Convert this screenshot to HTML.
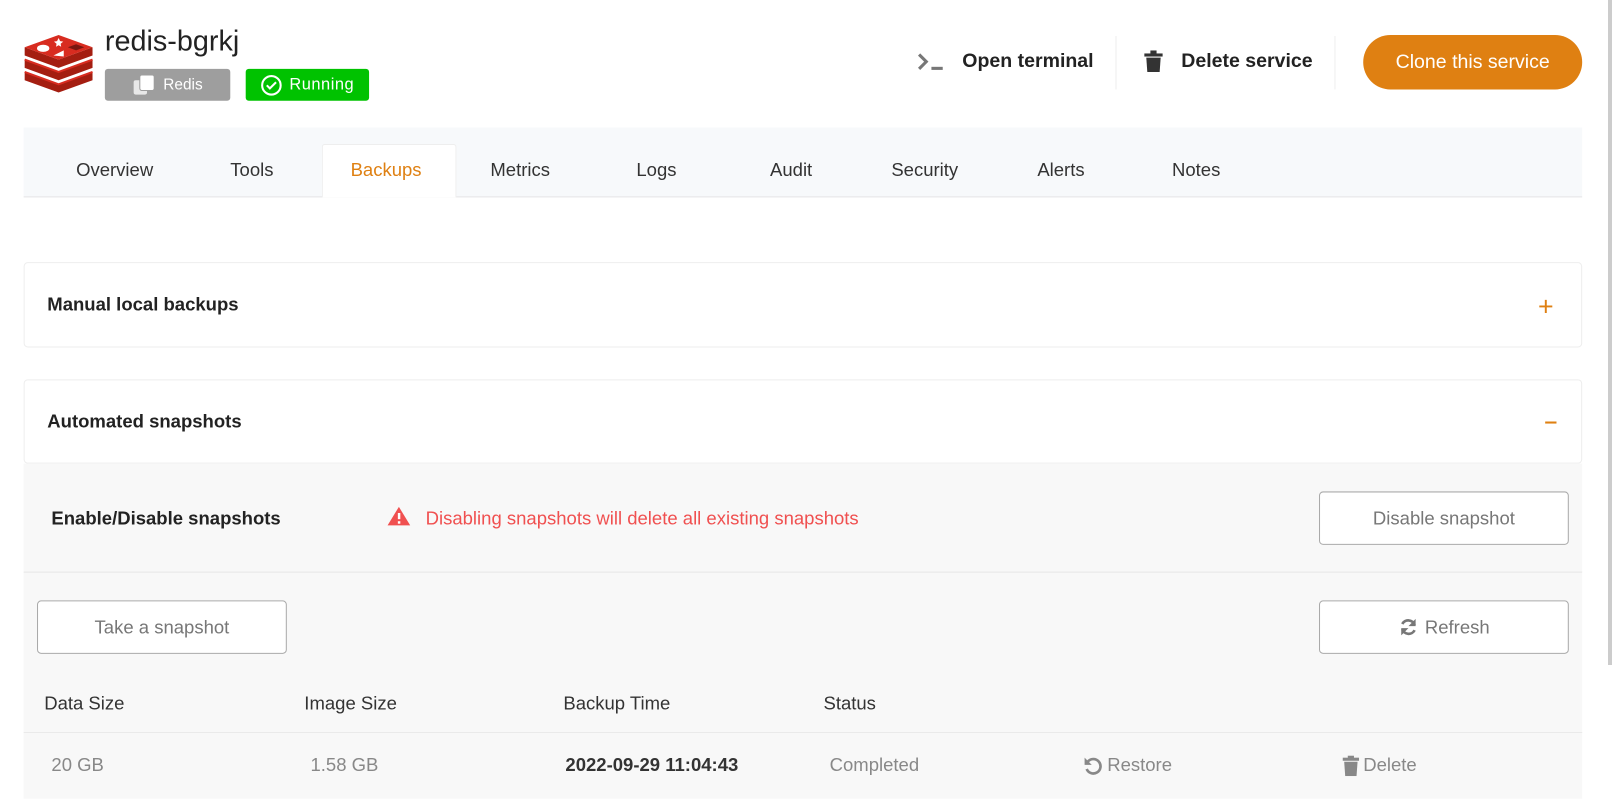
<!DOCTYPE html>
<html><head><meta charset="utf-8">
<style>
*{box-sizing:border-box;margin:0;padding:0}
body{width:1612px;height:811px;background:#fff;font-family:"Liberation Sans",sans-serif;position:relative;overflow:hidden;color:#222}
#w{position:absolute;left:0;top:0;width:1568px;height:789px;transform:scale(1.02806);transform-origin:0 0}
.a{position:absolute;white-space:nowrap}
.tab{position:absolute;top:155px;font-size:18px;color:#333}
.btn{position:absolute;background:#fff;border:1px solid #aaa;border-radius:4px;color:#777;font-size:18px;display:flex;align-items:center;justify-content:center}
.th{position:absolute;top:674px;font-size:18px;color:#333}
.td{position:absolute;top:734px;font-size:18px;color:#888}
</style></head><body>
<div class="a" style="right:0;top:0;width:4px;height:665px;background:#ccc"></div>
<div id="w">
<svg class="a" style="left:22px;top:32px" width="70" height="60" viewBox="0 0 70 60">
<path d="M2 38 L35 50 L68 38 L68 46 L35 58 L2 46Z" fill="#a41e11"/>
<path d="M2 26 L35 38 L68 26 L68 34 L35 46 L2 34Z" fill="#a41e11"/>
<path d="M2 14 L35 26 L68 14 L68 22 L35 34 L2 22Z" fill="#a41e11"/>
<path d="M2 14 L35 2 L68 14 L35 26Z" fill="#d82c20"/>
<path d="M2 26 L35 38 L68 26" fill="none" stroke="#d82c20" stroke-width="2"/>
<path d="M2 38 L35 50 L68 38" fill="none" stroke="#d82c20" stroke-width="2"/>
<ellipse cx="20" cy="15" rx="6" ry="3.5" fill="#fff"/>
<path d="M35 5 l1.5 3 3 .5 -2.5 2 .5 3 -2.5-1.5 -2.5 1.5 .5-3 -2.5-2 3-.5z" fill="#fff"/>
<path d="M30 22 L40 17 L40 23Z" fill="#fff"/>
<path d="M44 14 L52 11 L60 14 L52 17Z" fill="#7a1710"/>
</svg>
<div class="a" style="left:102px;top:24px;font-size:28px;color:#222">redis-bgrkj</div>
<div class="a" style="left:102px;top:67px;width:122px;height:31px;background:#9e9e9e;border-radius:3px;color:#fff;font-size:15px;display:flex;align-items:center;justify-content:center;gap:8px">
<svg width="22" height="22" viewBox="0 0 22 22"><rect x="1" y="6" width="13" height="14" rx="2" fill="#e8e8e8"/><rect x="7" y="1" width="14" height="15" rx="2" fill="#fff" stroke="#9e9e9e"/></svg>Redis</div>
<div class="a" style="left:239px;top:67px;width:120px;height:31px;background:#00c200;border-radius:3px;color:#fff;font-size:16px;display:flex;align-items:center;justify-content:center;gap:6px;letter-spacing:.5px">
<svg width="22" height="22" viewBox="0 0 22 22"><circle cx="11" cy="11" r="9" fill="none" stroke="#fff" stroke-width="2"/><path d="M6.5 11 l3 3 6-6" fill="none" stroke="#fff" stroke-width="2"/></svg>Running</div>
<svg class="a" style="left:892px;top:50px" width="28" height="20" viewBox="0 0 28 20"><path d="M2 3 L9 10 L2 17" fill="none" stroke="#777" stroke-width="3"/><rect x="14" y="15" width="11" height="3" fill="#777"/></svg>
<div class="a" style="left:936px;top:49px;font-size:19px;font-weight:bold;color:#222">Open terminal</div>
<div class="a" style="left:1085px;top:35px;width:1px;height:52px;background:#eee"></div>
<svg class="a" style="left:1113px;top:49px" width="18" height="22" viewBox="0 0 18 22"><rect x="0" y="3" width="18" height="3" fill="#333"/><rect x="6" y="0" width="6" height="4" fill="#333"/><path d="M2 7 H16 L15 21 H3Z" fill="#333"/></svg>
<div class="a" style="left:1149px;top:49px;font-size:19px;font-weight:bold;color:#222">Delete service</div>
<div class="a" style="left:1298px;top:35px;width:1px;height:52px;background:#eee"></div>
<div class="a" style="left:1326px;top:34px;width:213px;height:53px;background:#df8012;border-radius:27px;color:#fff;font-size:19px;display:flex;align-items:center;justify-content:center">Clone this service</div>
<div class="a" style="left:23px;top:124px;width:1516px;height:68px;background:#f7f9fb;border-bottom:1px solid #e6e6e6"></div>
<div class="a" style="left:313px;top:140px;width:131px;height:52px;background:#fff;border:1px solid #eee;border-bottom:none;border-radius:3px 3px 0 0"></div>
<div class="tab" style="left:74px">Overview</div>
<div class="tab" style="left:224px">Tools</div>
<div class="tab" style="left:341px;color:#df8012">Backups</div>
<div class="tab" style="left:477px">Metrics</div>
<div class="tab" style="left:619px">Logs</div>
<div class="tab" style="left:749px">Audit</div>
<div class="tab" style="left:867px">Security</div>
<div class="tab" style="left:1009px">Alerts</div>
<div class="tab" style="left:1140px">Notes</div>
<div class="a" style="left:23px;top:255px;width:1516px;height:83px;border:1px solid #eee;border-radius:4px"></div>
<div class="a" style="left:46px;top:286px;font-size:18px;font-weight:bold">Manual local backups</div>
<div class="a" style="left:1496px;top:283px;font-size:26px;color:#df8012">+</div>
<div class="a" style="left:23px;top:369px;width:1516px;height:82px;border:1px solid #eee;border-radius:4px"></div>
<div class="a" style="left:46px;top:400px;font-size:18px;font-weight:bold">Automated snapshots</div>
<div class="a" style="left:1503px;top:410px;width:11px;height:2px;background:#df8012"></div>
<div class="a" style="left:23px;top:451px;width:1516px;height:326px;background:#f8f8f8"></div>
<div class="a" style="left:23px;top:556px;width:1516px;height:1px;background:#e6e6e6"></div>
<div class="a" style="left:23px;top:712px;width:1516px;height:1px;background:#eaeaea"></div>
<div class="a" style="left:50px;top:494px;font-size:18px;font-weight:bold">Enable/Disable snapshots</div>
<svg class="a" style="left:376px;top:492px" width="24" height="20" viewBox="0 0 24 20"><path d="M12 1 L23 19 H1Z" fill="#f05050"/><rect x="11" y="7" width="2.4" height="6" fill="#fff"/><rect x="11" y="15" width="2.4" height="2.4" fill="#fff"/></svg>
<div class="a" style="left:414px;top:494px;font-size:18px;color:#f05050">Disabling snapshots will delete all existing snapshots</div>
<div class="btn" style="left:1283px;top:478px;width:243px;height:52px">Disable snapshot</div>
<div class="btn" style="left:36px;top:584px;width:243px;height:52px">Take a snapshot</div>
<div class="btn" style="left:1283px;top:584px;width:243px;height:52px;gap:6px"><svg width="20" height="20" viewBox="0 0 20 20"><path d="M16 8 A6.5 6.5 0 0 0 4 7" fill="none" stroke="#777" stroke-width="2.6"/><path d="M17 2 V9 H10Z" fill="#777"/><path d="M4 12 A6.5 6.5 0 0 0 16 13" fill="none" stroke="#777" stroke-width="2.6"/><path d="M3 18 V11 H10Z" fill="#777"/></svg>Refresh</div>
<div class="th" style="left:43px">Data Size</div>
<div class="th" style="left:296px">Image Size</div>
<div class="th" style="left:548px">Backup Time</div>
<div class="th" style="left:801px">Status</div>
<div class="td" style="left:50px">20 GB</div>
<div class="td" style="left:302px">1.58 GB</div>
<div class="td" style="left:550px;color:#333;font-weight:bold">2022-09-29 11:04:43</div>
<div class="td" style="left:807px">Completed</div>
<div class="td" style="left:1053px;display:flex;align-items:center;gap:4px"><svg width="20" height="20" viewBox="0 0 20 20"><path d="M5 6 A7 7 0 1 1 4 13" fill="none" stroke="#888" stroke-width="2.6"/><path d="M2 2 V9 H9Z" fill="#888"/></svg>Restore</div>
<div class="td" style="left:1306px;display:flex;align-items:center;gap:4px"><svg width="16" height="20" viewBox="0 0 16 20"><rect x="0" y="2" width="16" height="3" fill="#888"/><rect x="5" y="0" width="6" height="3" fill="#888"/><path d="M1.5 6 H14.5 L13.5 20 H2.5Z" fill="#888"/></svg>Delete</div>
</div>
</body></html>
